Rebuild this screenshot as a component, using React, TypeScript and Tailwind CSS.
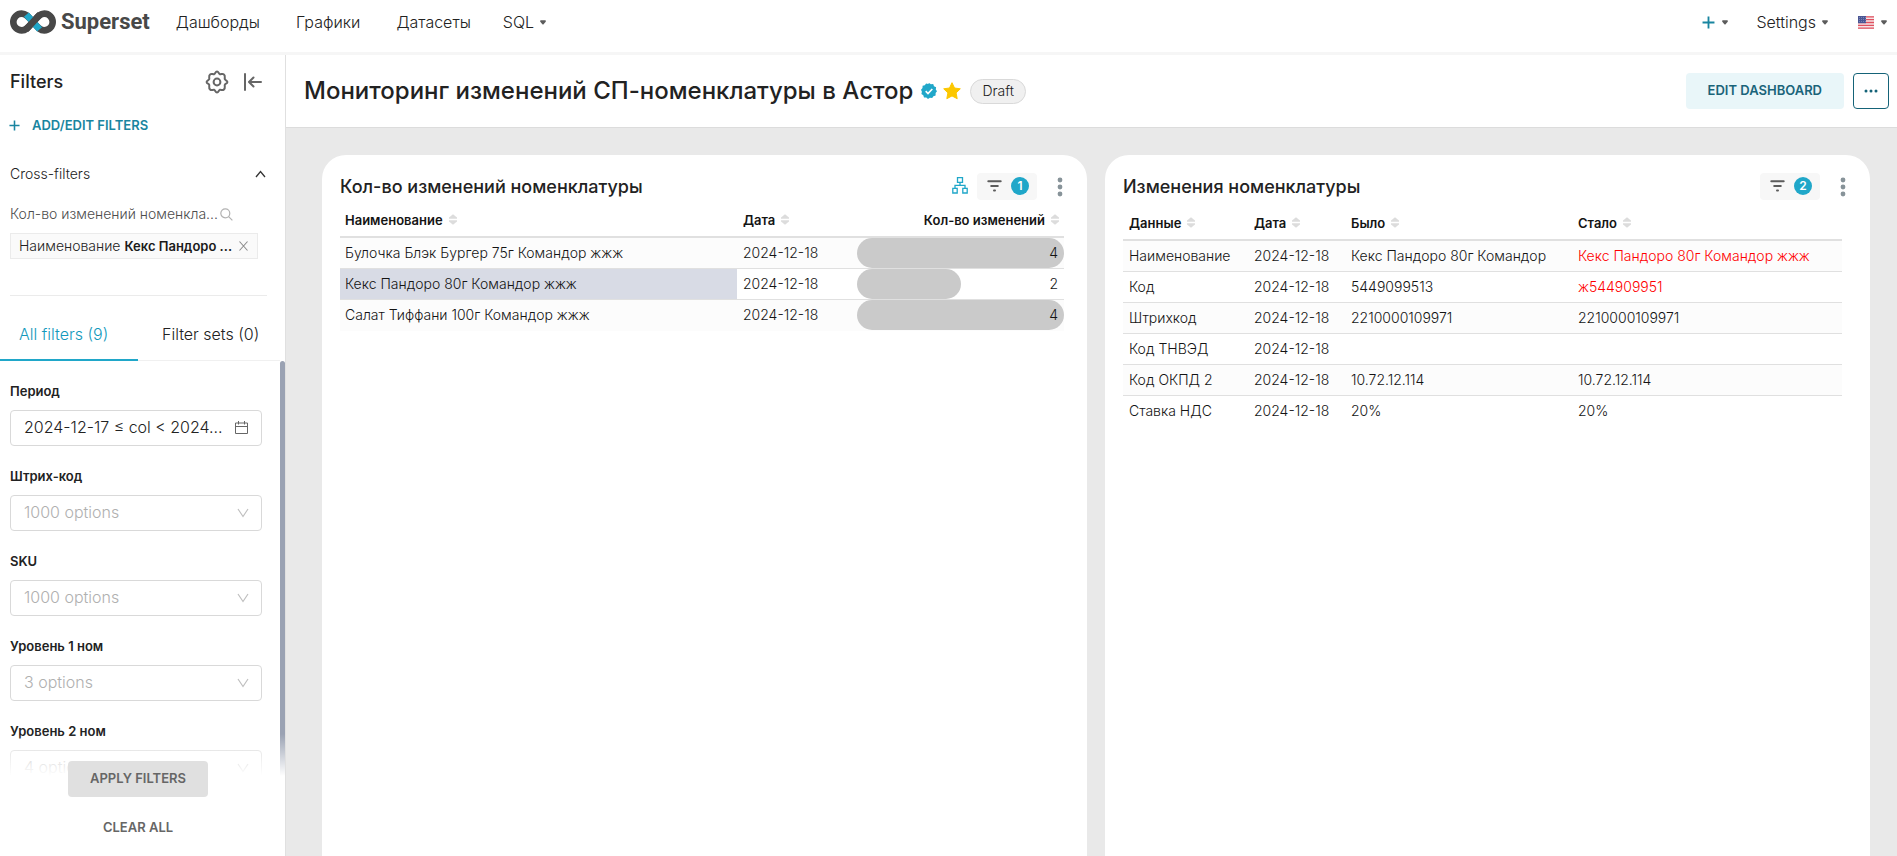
import React from "react";

const Caret = () => (
  <svg width="6" height="5" viewBox="0 0 6 5" className="shrink-0 text-[#5c5c5c]" aria-hidden="true">
    <path d="M0.8 0.3H5.2Q6.2 0.6 5.7 1.8L3.6 4.2Q3 4.8 2.4 4.2L0.3 1.8Q-0.2 0.6 0.8 0.3Z" fill="currentColor" />
  </svg>
);

const Logo = () => (
  <svg width="46" height="24" viewBox="0 0 46 24" fill="none" aria-hidden="true">
    <path
      d="M23 12C19 7.5 16.5 3.6 11.7 3.6A8.4 8.4 0 0 0 11.7 20.4C16.5 20.4 19 16.5 23 12C27 7.5 29.5 3.6 34.3 3.6A8.4 8.4 0 0 1 34.3 20.4C29.5 20.4 27 16.5 23 12Z"
      stroke="#484848"
      strokeWidth="6.6"
    />
    <path d="M16.4 4.6L29.6 19.4" stroke="#20a7c9" strokeWidth="6.6" />
    <path d="M16 19.6L30 4.4" stroke="#484848" strokeWidth="6.6" />
  </svg>
);

const SortIcon = () => (
  <svg width="8" height="11" viewBox="0 0 8 11" className="shrink-0 text-[#dcdcdc]" aria-hidden="true">
    <path d="M4 0.3L8 3.5V4.7H0V3.5Z" fill="currentColor" />
    <path d="M4 10.7L8 7.5V6.3H0V7.5Z" fill="currentColor" />
  </svg>
);

const GearIcon = () => (
  <svg width="24" height="24" viewBox="0 0 24 24" fill="none" stroke="#666666" strokeWidth="2" strokeLinejoin="round" aria-hidden="true">
    <path d="M12 1.6C13.6 1.6 13.7 3.7 14.8 4.2C15.9 4.6 17.5 3.2 18.7 4.3C20.9 6.2 19.3 7.7 19.8 9.2C20.3 10.4 22.4 10.3 22.4 12C22.4 13.7 20.3 13.6 19.8 14.8C19.3 16.3 20.9 17.8 18.7 19.7C17.5 20.8 15.9 19.4 14.8 19.8C13.7 20.3 13.6 22.4 12 22.4C10.4 22.4 10.3 20.3 9.2 19.8C8.1 19.4 6.5 20.8 5.3 19.7C3.1 17.8 4.7 16.3 4.2 14.8C3.7 13.6 1.6 13.7 1.6 12C1.6 10.3 3.7 10.4 4.2 9.2C4.7 7.7 3.1 6.2 5.3 4.3C6.5 3.2 8.1 4.6 9.2 4.2C10.3 3.7 10.4 1.6 12 1.6Z" />
    <circle cx="12" cy="12" r="3.4" />
  </svg>
);

const CollapseIcon = () => (
  <svg width="20" height="20" viewBox="0 0 20 20" fill="none" stroke="#666666" strokeWidth="2" strokeLinecap="round" strokeLinejoin="round" aria-hidden="true">
    <path d="M2 2V18M18 10H6.5M10.5 5.5L6 10L10.5 14.5" />
  </svg>
);

const PlusIcon = ({ size }: { size: number }) => (
  <svg width={size} height={size} viewBox="0 0 12 12" fill="none" stroke="#1985a0" strokeWidth="1.7" aria-hidden="true">
    <path d="M6 0.5V11.5M0.5 6H11.5" />
  </svg>
);

const ChevronDown = () => (
  <svg width="12" height="10" viewBox="0 0 12 10" fill="none" stroke="#bfbfbf" strokeWidth="1.2" aria-hidden="true">
    <path d="M1 1L6 8.5L11 1" />
  </svg>
);

const FlagIcon = () => (
  <svg width="16" height="13" viewBox="0 0 16 13" aria-hidden="true">
    <rect width="16" height="13" fill="#f4e4e6" />
    <path d="M0 0.9H16M0 3.7H16M0 6.5H16M0 9.3H16M0 12.1H16" stroke="#e0505f" strokeWidth="1.3" />
    <rect width="8" height="7.2" fill="#4a5694" />
    <path d="M1 1.5H8M1 3.5H8M1 5.5H8" stroke="#8d96c0" strokeWidth="0.7" strokeDasharray="1 1" />
  </svg>
);

const navItems = ["Дашборды", "Графики", "Датасеты"];

function TopNav() {
  return (
    <header className="flex h-[55px] shrink-0 items-center justify-between border-b-[3px] border-[#f6f6f6] bg-white px-[10px] pb-2">
      <div className="flex items-center">
        <a href="#home" className="flex items-center gap-[5px]">
          <Logo />
          <span className="font-[Roboto] text-[22px] leading-6 font-bold text-[#484848]">Superset</span>
        </a>
        <nav className="ml-[26px] flex items-center gap-8 text-[16px]">
          <div className="flex gap-9">
            {navItems.map((item) => (
              <a key={item} href="#nav">
                {item}
              </a>
            ))}
          </div>
          <button type="button" className="flex items-center gap-[6px]">
            SQL
            <Caret />
          </button>
        </nav>
      </div>
      <div className="flex items-center text-[16px]">
        <button type="button" aria-label="New" className="flex items-center gap-[7px]">
          <PlusIcon size={13} />
          <Caret />
        </button>
        <button type="button" className="ml-7 flex items-center gap-[6px]">
          Settings
          <Caret />
        </button>
        <button type="button" aria-label="Language" className="ml-[30px] flex items-center gap-[7px]">
          <FlagIcon />
          <Caret />
        </button>
      </div>
    </header>
  );
}

const selects = [
  { id: "barcode", label: "Штрих-код", placeholder: "1000 options" },
  { id: "sku", label: "SKU", placeholder: "1000 options" },
  { id: "level1", label: "Уровень 1 ном", placeholder: "3 options" },
  { id: "level2", label: "Уровень 2 ном", placeholder: "4 options" },
];

function Sidebar() {
  return (
    <aside className="relative flex w-[286px] shrink-0 flex-col border-r border-[#e0e0e0] bg-white">
      <div className="flex items-center justify-between pt-[15px] pr-[22px] pl-[10px]">
        <h2 className="text-[18px] leading-6 font-medium">Filters</h2>
        <div className="flex items-center gap-[14px]">
          <button type="button" aria-label="Filter settings">
            <GearIcon />
          </button>
          <button type="button" aria-label="Collapse filters">
            <CollapseIcon />
          </button>
        </div>
      </div>
      <button type="button" className="mt-[21px] flex items-center gap-3 self-start pl-[9px] text-[13px] leading-5 font-semibold text-[#1985a0]">
        <PlusIcon size={11} />
        ADD/EDIT FILTERS
      </button>
      <button type="button" className="mt-[29px] flex items-center justify-between pr-[19px] pl-[10px] text-[14px] leading-5">
        Cross-filters
        <svg width="11" height="8" viewBox="0 0 11 8" fill="none" stroke="#333333" strokeWidth="1.3" aria-hidden="true">
          <path d="M1 7L5.5 1.5L10 7" />
        </svg>
      </button>
      <div className="mt-5 flex items-center gap-[2px] pl-[10px] text-[14px] leading-5 text-[#4d4d4d]">
        <span className="whitespace-nowrap">Кол-во изменений номенкла...</span>
        <svg width="13" height="13" viewBox="0 0 13 13" fill="none" stroke="#b2b2b2" strokeWidth="1.2" aria-hidden="true">
          <circle cx="5.3" cy="5.3" r="4.5" />
          <path d="M8.6 8.6L12.4 12.4" />
        </svg>
      </div>
      <div className="mt-[9px] ml-[10px] flex h-[26px] w-[248px] items-center justify-between border border-[#ebebeb] bg-[#fafafa] pr-[9px] pl-2 text-[14px]">
        <span className="flex items-baseline gap-1 whitespace-nowrap">
          Наименование
          <strong className="text-[13px] font-semibold text-[#1a1a1a]">Кекс Пандоро ...</strong>
        </span>
        <button type="button" aria-label="Remove cross-filter">
          <svg width="9" height="10" viewBox="0 0 9 10" fill="none" stroke="#8c8c8c" strokeWidth="1.1" aria-hidden="true">
            <path d="M0.5 0.5L8.5 9.5M8.5 0.5L0.5 9.5" />
          </svg>
        </button>
      </div>
      <hr className="mt-9 mr-[18px] ml-[10px] border-[#ebebeb]" />
      <div role="tablist" className="mt-4 mr-[5px] flex h-[49px] border-b border-[#f0f0f0] text-[16px]">
        <button type="button" role="tab" aria-selected="true" className="-mb-px w-[138px] border-b-2 border-[#20a7c9] pb-1 pl-[19px] text-left text-[#1299bc]">
          All filters (9)
        </button>
        <button type="button" role="tab" aria-selected="false" className="ml-6 pb-[5px]">
          Filter sets (0)
        </button>
      </div>
      <div className="flex min-h-0 flex-1">
        <div className="flex min-w-0 flex-1 flex-col gap-5 overflow-hidden pt-5 pr-[18px] pl-[10px]">
          <div className="flex shrink-0 flex-col gap-[9px]">
            <label htmlFor="period" className="text-[13px] leading-5 font-semibold">
              Период
            </label>
            <button id="period" type="button" className="flex h-9 shrink-0 items-center justify-between rounded-[4px] border border-[#d9d9d9] px-[13px] pb-[2px] text-[16px] whitespace-nowrap">
              2024-12-17 ≤ col &lt; 2024...
              <svg width="13" height="13" viewBox="0 0 13 13" fill="none" stroke="#666666" strokeWidth="1" aria-hidden="true">
                <path d="M0.5 2H12.5V12.5H0.5ZM0.5 5.5H12.5M3.5 0V3.5M9.5 0V3.5" />
              </svg>
            </button>
          </div>
          {selects.map((item) => (
            <div key={item.id} className="flex shrink-0 flex-col gap-[9px]">
              <label htmlFor={item.id} className="text-[13px] leading-5 font-semibold">
                {item.label}
              </label>
              <div className="relative">
                <select id={item.id} className="block h-9 w-full appearance-none rounded-[4px] border border-[#d9d9d9] bg-white pb-[2px] pl-[13px] text-[16px] text-[#b0b0b0]">
                  <option>{item.placeholder}</option>
                </select>
                <span className="pointer-events-none absolute inset-y-0 right-[13px] flex items-center">
                  <ChevronDown />
                </span>
              </div>
            </div>
          ))}
        </div>
        <div className="w-[5px] rounded-t-full bg-[#9aa2b3]" />
      </div>
      <div className="pointer-events-none absolute inset-x-0 bottom-0 flex flex-col items-center bg-[linear-gradient(to_bottom,rgba(255,255,255,0),#ffffff_42px)] pt-[27px] pr-[9px] pb-[19px] text-[13px] font-semibold text-[#666666]">
        <button type="button" className="pointer-events-auto h-9 rounded-[4px] bg-[#e0e0e0] px-[22px]">
          APPLY FILTERS
        </button>
        <button type="button" className="pointer-events-auto mt-[20px] leading-5">
          CLEAR ALL
        </button>
      </div>
    </aside>
  );
}

function PageHeader() {
  return (
    <div className="flex h-[73px] shrink-0 items-center justify-between border-b border-[#dcdcdc] bg-white pr-2 pl-[18px]">
      <div className="flex items-center">
        <h1 className="text-[24px] leading-8 font-medium">Мониторинг изменений СП-номенклатуры в Астор</h1>
        <svg width="16" height="16" viewBox="0 0 16 16" className="ml-2" aria-label="Certified">
          <path
            d="M8 0L9.9 1.3L12.2 1.1L13 3.2L15.1 4.2L14.8 6.4L16 8.3L14.6 10.1L14.6 12.4L12.4 13.2L11.2 15.1L8.9 14.8L7 16L5.3 14.6L3 14.5L2.3 12.3L0.4 11L0.9 8.8L0 6.8L1.5 5.1L1.6 2.8L3.8 2.2L5.1 0.4L7.2 0.9Z"
            fill="#20a7c9"
          />
          <path d="M4.7 8.2L7 10.5L11.3 6" fill="none" stroke="#ffffff" strokeWidth="1.7" />
        </svg>
        <button type="button" aria-label="Favorite" className="ml-[6px]">
          <svg width="18" height="18" viewBox="0 0 18 18" aria-hidden="true">
            <path
              d="M9 0.7L11.5 6L17.3 6.8L13.1 10.9L14.2 16.7L9 13.9L3.8 16.7L4.9 10.9L0.7 6.8L6.5 6Z"
              fill="#fcc700"
              stroke="#fcc700"
              strokeLinejoin="round"
            />
          </svg>
        </button>
        <span className="ml-[9px] flex h-[25px] items-center rounded-full border border-[#d9d9d9] bg-[#f0f0f0] px-[11px] pb-[2px] text-[14px]">Draft</span>
      </div>
      <div className="flex items-center gap-[9px]">
        <button type="button" className="h-9 rounded-[4px] bg-[#e9f6f9] px-[22px] text-[13px] font-semibold text-[#1a647a]">
          EDIT DASHBOARD
        </button>
        <button type="button" aria-label="More actions" className="flex h-9 w-9 items-center justify-center rounded-[4px] border border-[#156378]">
          <svg width="14" height="4" viewBox="0 0 14 4" fill="#156378" aria-hidden="true">
            <circle cx="2" cy="2" r="1.5" />
            <circle cx="7" cy="2" r="1.5" />
            <circle cx="12" cy="2" r="1.5" />
          </svg>
        </button>
      </div>
    </div>
  );
}

function CardHeader({ title, count, linked }: { title: string; count: number; linked?: boolean }) {
  return (
    <div className="flex h-[27px] items-center pr-[6px]">
      <h2 className="min-w-0 flex-1 truncate text-[18px] leading-6 font-medium">{title}</h2>
      {linked && (
        <svg width="16" height="17" viewBox="0 0 16 17" fill="none" stroke="#20a7c9" strokeWidth="1.3" className="mr-[9px] mb-[2px]" aria-label="Cross-filter applied">
          <path d="M5.5 0.7H10.5V5.3H5.5ZM0.8 11.3H5.2V16H0.8ZM10.8 11.3H15.2V16H10.8ZM8 5.3V8.3M3 11.3V8.3H13V11.3" />
        </svg>
      )}
      <button type="button" aria-label={`Applied filters: ${count}`} className="flex h-[27px] w-[60px] items-center gap-[9px] rounded-[4px] bg-[#f7f7f7] pb-px pl-[10px]">
        <svg width="15" height="12" viewBox="0 0 15 12" fill="none" stroke="#5c5c5c" strokeWidth="2" strokeLinecap="round" aria-hidden="true">
          <path d="M1.3 1.3H13.7M4.2 6H10.8M7 10.5H8" />
        </svg>
        <span className="flex h-[18px] w-[18px] items-center justify-center rounded-full bg-[#20a7c9] text-[12px] leading-[18px] font-semibold text-white">
          {count}
        </span>
      </button>
      <button type="button" aria-label="Chart menu" className="ml-5">
        <svg width="6" height="20" viewBox="0 0 6 20" fill="#879399" aria-hidden="true">
          <circle cx="3" cy="3" r="2.4" />
          <circle cx="3" cy="10" r="2.4" />
          <circle cx="3" cy="17" r="2.4" />
        </svg>
      </button>
    </div>
  );
}

const changes = [
  { name: "Булочка Блэк Бургер 75г Командор жжж", date: "2024-12-18", count: 4 },
  { name: "Кекс Пандоро 80г Командор жжж", date: "2024-12-18", count: 2, selected: true },
  { name: "Салат Тиффани 100г Командор жжж", date: "2024-12-18", count: 4 },
];

function CountsTable() {
  return (
    <table className="w-full table-fixed border-collapse text-[14px] leading-5 text-[#141414]">
      <colgroup>
        <col />
        <col className="w-[120px]" />
        <col className="w-[207px]" />
      </colgroup>
      <thead className="text-[13px]">
        <tr className="h-[34px] border-b-2 border-[#e0e0e0] text-left">
          <th className="px-[5px] font-semibold">
            <span className="flex items-center gap-[6px]">
              Наименование <SortIcon />
            </span>
          </th>
          <th className="px-[6px] font-semibold">
            <span className="flex items-center gap-[6px]">
              Дата <SortIcon />
            </span>
          </th>
          <th className="px-[5px] font-semibold">
            <span className="flex items-center justify-end gap-[6px]">
              Кол-во изменений <SortIcon />
            </span>
          </th>
        </tr>
      </thead>
      <tbody>
        {changes.map((row) => (
          <tr key={row.name} className="h-[31px] border-b border-[#e0e0e0] odd:bg-[#fcfcfc] last:border-b-0">
            <td className={row.selected ? "bg-[#d8dbe5] px-[5px]" : "px-[5px]"}>{row.name}</td>
            <td className="px-[6px]">{row.date}</td>
            <td className="p-0">
              <div className="grid h-[30px] items-center">
                <div className="col-start-1 row-start-1 h-full rounded-full bg-[#cacaca]" style={{ width: `${(row.count / 4) * 100}%` }} />
                <span className="col-start-1 row-start-1 pr-[6px] text-right">{row.count}</span>
              </div>
            </td>
          </tr>
        ))}
      </tbody>
    </table>
  );
}

const details = [
  { field: "Наименование", date: "2024-12-18", before: "Кекс Пандоро 80г Командор", after: "Кекс Пандоро 80г Командор жжж", changed: true },
  { field: "Код", date: "2024-12-18", before: "5449099513", after: "ж544909951", changed: true },
  { field: "Штрихкод", date: "2024-12-18", before: "2210000109971", after: "2210000109971" },
  { field: "Код ТНВЭД", date: "2024-12-18", before: "", after: "" },
  { field: "Код ОКПД 2", date: "2024-12-18", before: "10.72.12.114", after: "10.72.12.114" },
  { field: "Ставка НДС", date: "2024-12-18", before: "20%", after: "20%" },
];

function DetailsTable() {
  return (
    <table className="w-full table-fixed border-collapse text-[14px] leading-5 text-[#141414]">
      <colgroup>
        <col className="w-[125px]" />
        <col className="w-[97px]" />
        <col className="w-[227px]" />
        <col />
      </colgroup>
      <thead className="text-[13px]">
        <tr className="h-[34px] border-b-2 border-[#e0e0e0] text-left">
          {["Данные", "Дата", "Было", "Стало"].map((name) => (
            <th key={name} className="px-[6px] font-semibold">
              <span className="flex items-center gap-[6px]">
                {name} <SortIcon />
              </span>
            </th>
          ))}
        </tr>
      </thead>
      <tbody>
        {details.map((row) => (
          <tr key={row.field} className="h-[31px] border-b border-[#e0e0e0] odd:bg-[#fcfcfc] last:border-b-0">
            <td className="px-[6px]">{row.field}</td>
            <td className="px-[6px]">{row.date}</td>
            <td className="px-[6px]">{row.before}</td>
            <td className={row.changed ? "px-[6px] text-[#ff0000]" : "px-[6px]"}>{row.after}</td>
          </tr>
        ))}
      </tbody>
    </table>
  );
}

export default function App() {
  return (
    <div className="flex h-screen flex-col overflow-hidden bg-white font-[Inter,'Noto_Sans',sans-serif] font-light text-[#222222]">
      <TopNav />
      <div className="flex min-h-0 flex-1">
        <Sidebar />
        <main className="flex min-w-0 flex-1 flex-col bg-[#e9e9e9]">
          <PageHeader />
          <div className="grid min-h-0 flex-1 grid-cols-2 gap-[18px] pt-[27px] pr-[27px] pl-9">
            <section className="rounded-t-[24px] bg-white px-[18px] pt-[18px]">
              <CardHeader title="Кол-во изменений номенклатуры" count={1} linked />
              <div className="mt-[3px] pr-[5px]">
                <CountsTable />
              </div>
            </section>
            <section className="rounded-t-[24px] bg-white px-[18px] pt-[18px]">
              <CardHeader title="Изменения номенклатуры" count={2} />
              <div className="mt-[6px] pr-[10px]">
                <DetailsTable />
              </div>
            </section>
          </div>
        </main>
      </div>
    </div>
  );
}
